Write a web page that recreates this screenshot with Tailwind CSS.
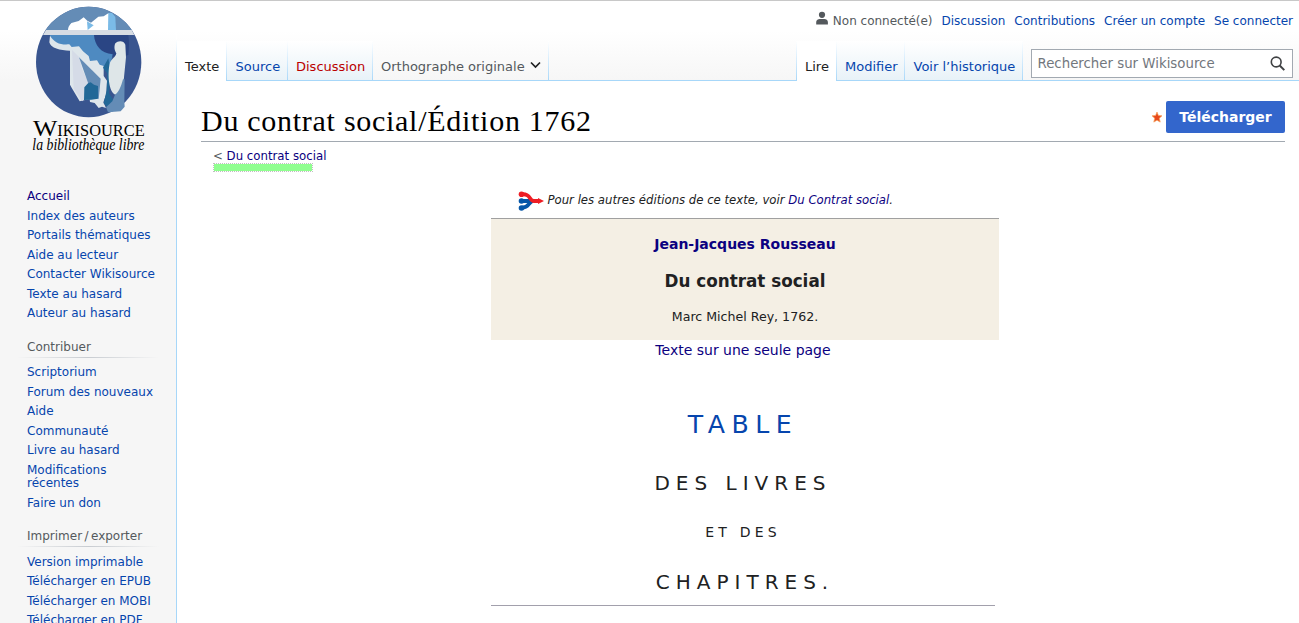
<!DOCTYPE html>
<html lang="fr">
<head>
<meta charset="utf-8">
<title>Du contrat social/Édition 1762 — Wikisource</title>
<script src="https://cdn.jsdelivr.net/npm/@tailwindcss/browser@4"></script>
</head>
<body class="h-[623px] overflow-hidden bg-white font-['DejaVu_Sans',sans-serif] text-[14px] text-[#202122]">
<div class="flex h-[623px] overflow-hidden border-t border-[#c8c8c8]">
  <aside class="flex w-[176px] shrink-0 flex-col bg-[#f6f6f6] bg-[linear-gradient(to_bottom,#ffffff_30px,#f6f6f6_80px)] text-[12px] leading-[13.5px] text-[#0645ad]">
    <svg class="h-[160px] w-[176px] shrink-0" viewBox="0 3 528 480">
      <defs><clipPath id="disc"><ellipse cx="266" cy="186" rx="158" ry="166"/></clipPath></defs>
      <g clip-path="url(#disc)">
        <rect x="100" y="15" width="340" height="345" fill="#39558f"/>
        <rect x="100" y="15" width="340" height="76" fill="#648cb6"/>
        <path d="M281 105h104c3 20 2 40 0 60l-20 5h-27c-35 0-57-30-57-65z" fill="#2a4584"/>
        <path d="M150 105h132c2 30 20 55 56 58l-8 40-35 5-30-15-48-52-62-3c-3-10-5-20-5-33z" fill="#4e8ac1"/>
        <path d="M150 107c14 22 30 28 58 26l7 8 22-2 12 15 17 14 4 15 21-2 8 13 12 4v30l10 14-2 40-9 25 8 17-12-4-10 4-12-15-14-3-1-8-18 3-12 3-25-42-4-8V152c-30 0-58-8-62-25z" fill="#dee6eb"/>
        <path d="M216 150l22 22 8 35 20 42-14 50-6 5-25-38z" fill="#d5dbe7"/>
        <path d="M237 172l65 64-6 62-20-25-12-25z" fill="#648cb6"/>
        <path d="M264 250l8-3 10 7 12 4v38l-20 3-22 1 1-38z" fill="#226897"/>
        <path d="M325 175l6 35-4 70 16 25-22 15-10-10 9-39 2-50-13-18z" fill="#226897"/>
        <path d="M346 130c8-9 26-9 30 4l2 38-6 60c-1 25-14 50-26 52-20-8-24-62-17-92 3-14 18-20 20-32-5-8-8-19-3-30z" fill="#dee6e8"/>
      </g>
      <path d="M374 238l-1 67 1 15-12 14-38 3-6-15 19-18 8-20c10-6 18-22 24-46z" fill="#648cb6"/>
      <path d="M204 91c1-14 6-16 10-22l22-6 15-11 11 10 11 6 22-18 16-1 15-10 10 52z" fill="#fff"/>
      <path d="M261 64l20 12-18 14z" fill="#7bbbe7"/>
      <path d="M325 39h11l10 12 2 40h-24z" fill="#7bbbe7"/>
      <path d="M138 90h257l8 15H129z" fill="#d7dce3"/>
      <g fill="#000" font-family="'Liberation Serif',serif">
        <text x="99" y="407" font-size="68" textLength="73" lengthAdjust="spacingAndGlyphs">W</text>
        <text x="172" y="407" font-size="51" textLength="262" lengthAdjust="spacingAndGlyphs">IKISOURCE</text>
        <text x="97" y="449" font-size="47" font-style="italic" textLength="336" lengthAdjust="spacingAndGlyphs">la bibliothèque libre</text>
      </g>
    </svg>
    <ul class="mt-[26px] ml-[27px] shrink-0 [&>li]:py-[3px]">
      <li class="text-[#0b0080]">Accueil</li><li>Index des auteurs</li><li>Portails thématiques</li><li>Aide au lecteur</li><li>Contacter Wikisource</li><li>Texte au hasard</li><li>Auteur au hasard</li>
    </ul>
    <h3 class="mt-[17px] ml-[27px] h-4 shrink-0 text-[#54595d]">Contribuer</h3>
    <div class="ml-[17px] h-px w-[142px] shrink-0 bg-linear-to-r from-transparent via-[#c8ccd1] to-transparent"></div>
    <ul class="mt-[5.500px] ml-[27px] shrink-0 [&>li]:py-[3px]">
      <li>Scriptorium</li><li>Forum des nouveaux</li><li>Aide</li><li>Communauté</li><li>Livre au hasard</li><li>Modifications<br>récentes</li><li>Faire un don</li>
    </ul>
    <h3 class="mt-[17px] ml-[27px] h-4 shrink-0 text-[#54595d]">Imprimer&#8239;/&#8239;exporter</h3>
    <div class="ml-[17px] h-px w-[142px] shrink-0 bg-linear-to-r from-transparent via-[#c8ccd1] to-transparent"></div>
    <ul class="mt-[5.500px] ml-[27px] shrink-0 [&>li]:py-[3px]">
      <li>Version imprimable</li><li>Télécharger en EPUB</li><li>Télécharger en MOBI</li><li>Télécharger en PDF</li>
    </ul>
  </aside>
  <div class="w-px shrink-0 bg-[linear-gradient(to_bottom,#ffffff_38px,#a7d7f9_79px)]"></div>

  <div class="flex min-w-0 flex-1 flex-col">
    <header class="flex h-[80px] shrink-0 flex-col bg-[linear-gradient(to_bottom,#ffffff_30px,#f6f6f6_80px)]">
      <div class="flex h-[40px] items-center justify-end gap-[9px] pr-[6px] text-[12px] text-[#0645ad]">
        <span class="flex items-center gap-[4px] text-[#54595d]">
          <svg class="-mt-[6px] h-[14px] w-[13px]" viewBox="0 0 13 14" fill="#54595d"><circle cx="6" cy="3.800" r="3.100"/><path d="M.2 13.500v-2.600C.2 9 2.200 8 3.700 8h4.800c1.500 0 3.400 1 3.400 2.900v2.600z"/></svg>
          Non connecté(e)</span>
        <span>Discussion</span><span>Contributions</span><span>Créer un compte</span><span>Se connecter</span>
      </div>
      <nav class="flex h-[40px] text-[13px] leading-[15px] whitespace-nowrap text-[#0645ad]">
        <div class="w-[49px] bg-white pt-[18px] pl-2 text-[#202122]">Texte</div>
        <div class="w-px bg-linear-to-b from-white to-[#a7d7f9]"></div>
        <div class="w-[60px] border-b border-[#a7d7f9] bg-linear-to-b from-white to-[#e8f2f8] pt-[18px] pl-[8.500px]">Source</div>
        <div class="w-px bg-linear-to-b from-white to-[#a7d7f9]"></div>
        <div class="w-[84px] border-b border-[#a7d7f9] bg-linear-to-b from-white to-[#e8f2f8] pt-[18px] pl-2 text-[#ba0000]">Discussion</div>
        <div class="w-px bg-linear-to-b from-white to-[#a7d7f9]"></div>
        <div class="flex w-[175px] gap-[5px] border-b border-[#a7d7f9] pt-[18px] pl-2 text-[#54595d]">Orthographe originale
          <svg class="mt-px h-[10px] w-[11px]" viewBox="0 0 11 10" fill="none" stroke="#202122" stroke-width="1.7"><path d="M1 2.500l4.500 4.500L10 2.500"/></svg>
        </div>
        <div class="w-px bg-linear-to-b from-white to-[#a7d7f9]"></div>
        <div class="flex-1 border-b border-[#a7d7f9]"></div>
        <div class="w-px bg-linear-to-b from-white to-[#a7d7f9]"></div>
        <div class="w-[39px] bg-white pt-[18px] pl-2 text-[#202122]">Lire</div>
        <div class="w-px bg-linear-to-b from-white to-[#a7d7f9]"></div>
        <div class="w-[67px] border-b border-[#a7d7f9] bg-linear-to-b from-white to-[#e8f2f8] pt-[18px] pl-2">Modifier</div>
        <div class="w-px bg-linear-to-b from-white to-[#a7d7f9]"></div>
        <div class="w-[117px] border-b border-[#a7d7f9] bg-linear-to-b from-white to-[#e8f2f8] pt-[18px] pl-[8.500px]">Voir l’historique</div>
        <div class="w-px bg-linear-to-b from-white to-[#a7d7f9]"></div>
        <div class="w-[276px] border-b border-[#a7d7f9] pt-[8px] pl-2">
          <div class="flex h-[29px] w-[262px] items-center justify-between border border-[#a2a9b1] bg-white pr-[7px] pl-[5.500px] text-[13.333px] text-[#72777d]">
            <span class="-mt-px">Rechercher sur Wikisource</span>
            <svg class="-mt-px h-[15px] w-[15px]" viewBox="0 0 15 15" fill="none" stroke="#404244" stroke-width="1.600"><circle cx="6.200" cy="6" r="4.900"/><path d="M9.700 9.500l4.600 4.600" stroke-width="2"/></svg>
          </div>
        </div>
      </nav>
    </header>

    <main class="flex flex-1 flex-col pr-[14px] pl-[24px]">
      <div class="flex h-[61px] shrink-0 justify-between border-b border-[#a2a9b1]">
        <h1 class="pt-[22px] font-['Liberation_Serif',serif] text-[30px] leading-[36px] tracking-[0.72px] whitespace-nowrap text-black">Du contrat social/Édition 1762</h1>
        <div class="flex gap-[3px] pt-[20px]">
          <svg class="mt-[10px] h-[12px] w-[12px]" viewBox="0 0 12 12"><path d="M6 1l1.400 3.500 3.600.3-2.700 2.400.9 3.900L6 9.200l-3.200 1.900.9-3.900L1 4.800l3.600-.3z" fill="#e8481c" stroke="#f5a35c" stroke-width=".7"/></svg>
          <div class="flex h-8 w-[119px] items-center justify-center rounded-[2px] bg-[#3366cc] text-[14px] font-bold text-white">Télécharger</div>
        </div>
      </div>
      <div class="mt-[6px] ml-[12px] h-[16px] shrink-0 text-[11.760px] leading-[16px] text-[#54595d]">&lt; <span class="text-[#0b0080]">Du contrat social</span></div>
      <div class="-mt-px ml-[12px] h-[9px] w-[100px] shrink-0 border border-dotted border-[#c0c0c0] bg-[#90ff90] bg-clip-padding"></div>

      <section class="ml-[290px] flex w-[508px] flex-col text-center">
        <div class="mt-[18px] flex h-[28px] gap-[3.500px] pl-[27px] text-[11.700px] leading-[20px] whitespace-nowrap italic">
          <svg class="mt-px h-[20px] w-[26px]" viewBox="0 0 26 20" fill="none" stroke-width="3.800"><path d="M4 16.700c7 0 6-5 11-7M4 10h10" stroke="#0657a8"/><circle cx="3.500" cy="10" r="2.800" fill="#0657a8"/><circle cx="3.500" cy="17" r="2.800" fill="#0657a8"/><path d="M4 3.300c9-.8 7 6.700 12 6.700h5" stroke="#ee1d24"/><circle cx="3.500" cy="3.200" r="2.800" fill="#ee1d24"/><path d="M20 7l6 3-6 3z" fill="#ee1d24"/></svg>
          <span>Pour les autres éditions de ce texte, voir <span class="text-[#0b0080]">Du Contrat social</span>.</span>
        </div>
        <div class="h-[122px] border-t border-[#a0a0a0] bg-[#f4efe4]">
          <p class="mt-[14px] font-bold leading-[22px] text-[#0b0080]">Jean-Jacques Rousseau</p>
          <p class="mt-[13px] text-[16.800px] font-bold leading-[26px]">Du contrat social</p>
          <p class="mt-[13px] text-[12.600px] leading-[20px]">Marc Michel Rey, 1762.</p>
        </div>
        <div class="flex w-[504px] flex-col">
          <p class="leading-[21px] text-[#0b0080]">Texte sur une seule page</p>
          <p class="mt-[44px] text-[25.200px] leading-[40px] tracking-[.26em] text-[#0645ad]">TABLE</p>
          <p class="mt-[22px] text-[20px] leading-[32px] tracking-[.3em]">DES LIVRES</p>
          <p class="mt-[22px] leading-[22px] tracking-[.3em]">ET DES</p>
          <p class="mt-[23px] pl-[4px] text-[20px] leading-[32px] tracking-[.3em]">CHAPITRES.</p>
          <div class="mt-[7px] h-px bg-[#a2a0ac]"></div>
        </div>
      </section>
    </main>
  </div>
</div>
</body>
</html>
